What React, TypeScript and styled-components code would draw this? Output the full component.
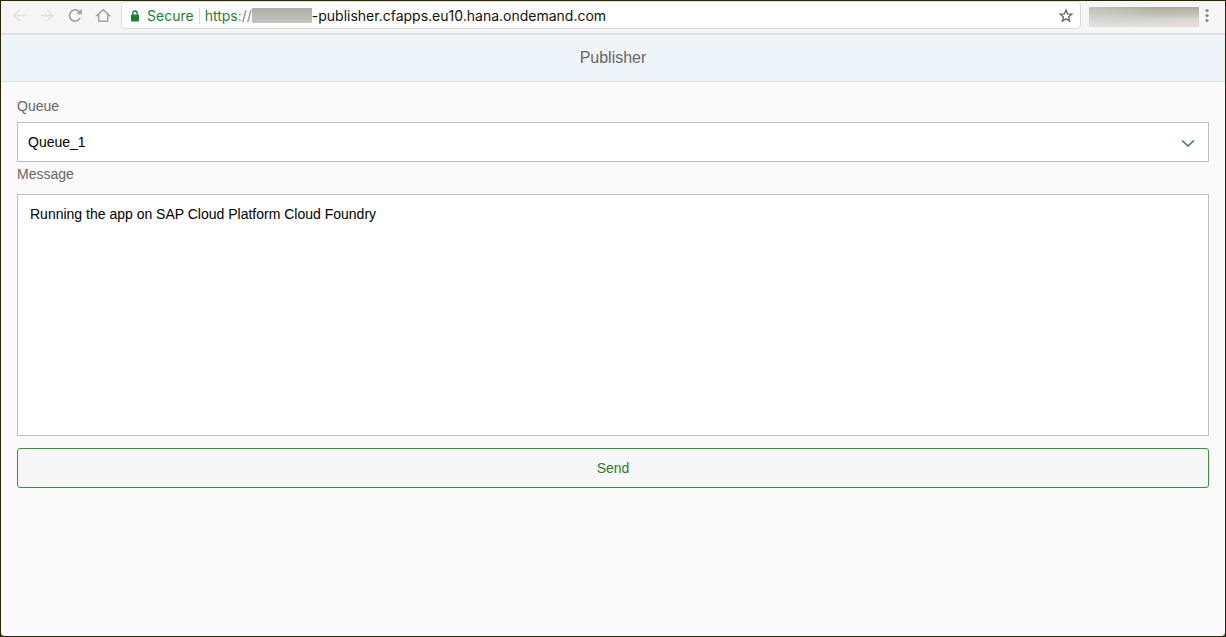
import React, { useState } from "react";
import styled, { createGlobalStyle } from "styled-components";

const GlobalStyle = createGlobalStyle`
  *, *::before, *::after { box-sizing: border-box; }
  body {
    margin: 0;
    font-family: "Liberation Sans", Arial, sans-serif;
    font-size: 14px;
  }
`;

const Frame = styled.div`
  display: flex;
  flex-direction: column;
  min-height: 100vh;
  border: 1px solid #2b2602;
  background: #55544c;
`;

const Toolbar = styled.nav`
  display: flex;
  align-items: flex-start;
  height: 34px;
  padding-right: 13px;
  background: #f6f6f6;
  border-bottom: 2px solid #e0e1e4;
`;

const NavButtons = styled.div`
  display: flex;
  width: 120px;
  padding: 6px 0 0 9px;
  gap: 10px;
`;

const IconButton = styled.button<{ $color: string }>`
  display: flex;
  padding: 0;
  border: 0;
  background: none;
  color: ${(p) => p.$color};
`;

const AddressBar = styled.div`
  display: flex;
  align-items: center;
  flex: 1;
  min-width: 0;
  height: 28px;
  padding: 2px 6px 0 8px;
  border: 1px solid #dcdcdc;
  border-radius: 4px;
  background: #ffffff;
  font-family: Inter, Roboto, sans-serif;
  color: #111111;
`;

const Secure = styled.span`
  display: flex;
  align-items: center;
  gap: 7px;
  padding-right: 5px;
  margin-right: 5px;
  border-right: 1px solid #d8d8d8;
  color: #1c7f37;
  line-height: 16px;
`;

const Url = styled.span`
  display: flex;
  align-items: center;
  flex: 1;
  min-width: 0;
  line-height: 16px;
  white-space: nowrap;
`;

const Scheme = styled.span`
  color: #1c7f37;
`;

const Slashes = styled.span`
  color: #808080;
`;

const HiddenHost = styled.span`
  width: 60px;
  height: 15px;
  margin-bottom: 2px;
  background: linear-gradient(#adada3, #c3c5bf);
`;

const HiddenTools = styled.div`
  width: 110px;
  height: 20px;
  margin: 6px 0 0 8px;
  background:
    radial-gradient(ellipse at 95% 100%, #e6dcd9 0%, transparent 45%),
    linear-gradient(90deg, #dde0dc66 0%, transparent 60%),
    linear-gradient(#adac9c 0%, #c5c7be 45%, #e2e4e1 100%);
`;

const MenuButton = styled(IconButton)`
  margin: 7px 0 0 5px;
`;

const Page = styled.div`
  display: flex;
  flex-direction: column;
  flex: 1;
  border-radius: 0 0 4px 4px;
  background: #fafafa;
`;

const Header = styled.header`
  display: flex;
  align-items: center;
  justify-content: center;
  height: 47px;
  background: #eff4f9;
  border-bottom: 1px solid #d9e2ea;
`;

const Title = styled.h1`
  margin: 0;
  font-size: 16px;
  font-weight: 400;
  line-height: 24px;
  color: #666666;
`;

const Form = styled.form`
  display: flex;
  flex-direction: column;
  padding: 12px 16px;
`;

const Label = styled.label`
  line-height: 24px;
  color: #666666;
`;

const SelectBox = styled.div`
  display: grid;
  align-items: center;
  margin-top: 4px;

  > * { grid-area: 1 / 1; }
  > svg {
    justify-self: end;
    margin-right: 13px;
    pointer-events: none;
  }
`;

const Select = styled.select`
  appearance: none;
  width: 100%;
  height: 40px;
  padding: 0 40px 0 10px;
  border: 1px solid #bfbfbf;
  border-radius: 0;
  background: #ffffff;
  color: #000000;
  font: inherit;
`;

const TextArea = styled.textarea`
  display: block;
  height: 242px;
  margin-top: 8px;
  padding: 10px 12px;
  border: 1px solid #bfbfbf;
  border-radius: 0;
  background: #ffffff;
  color: #000000;
  font: inherit;
  line-height: 18px;
  resize: none;
`;

const SendButton = styled.button`
  height: 40px;
  margin-top: 12px;
  border: 1px solid #3d8b40;
  border-radius: 3px;
  background: #f7f7f7;
  color: #2b7c2b;
  font: inherit;
`;

const stroke = { fill: "none", stroke: "currentColor", strokeWidth: 1.5 };

const BackIcon = () => (
  <svg width="18" height="18" viewBox="0 0 18 18" {...stroke}>
    <path d="M15.5 8.5H4M9.5 3L4 8.5 9.5 14" />
  </svg>
);

const ForwardIcon = () => (
  <svg width="18" height="18" viewBox="0 0 18 18" {...stroke}>
    <path d="M3 8.5H14.5M9 3L14.5 8.5 9 14" />
  </svg>
);

const ReloadIcon = () => (
  <svg width="18" height="18" viewBox="0 0 18 18" {...stroke} strokeWidth={1.7}>
    <path d="M14 11.2a5.6 5.6 0 1 1-.4-6" />
    <path d="M15.8 1.7v5.5H10.2z" fill="currentColor" stroke="none" />
  </svg>
);

const HomeIcon = () => (
  <svg width="18" height="18" viewBox="0 0 18 18" {...stroke}>
    <path d="M4.7 8.6v5.6h9V8.6h1.8L9.2 2.7 2.9 8.6z" />
  </svg>
);

const LockIcon = () => (
  <svg width="10" height="12" viewBox="0 0 10 12">
    <rect x="1" y="4.5" width="8" height="7" rx="0.8" fill="currentColor" />
    <path d="M2.8 5V3.2a2.2 2.2 0 0 1 4.4 0V5" fill="none" stroke="currentColor" strokeWidth="1.3" />
  </svg>
);

const StarIcon = () => (
  <svg width="16" height="16" viewBox="0 0 16 16" {...stroke} strokeWidth={1.4}>
    <path d="M8 2l1.6 3.9 4.2.3-3.2 2.7 1 4.1L8 10.8l-3.6 2.2 1-4.1-3.2-2.7 4.2-.3z" />
  </svg>
);

const MoreIcon = () => (
  <svg width="8" height="16" viewBox="0 0 8 16" fill="currentColor">
    <circle cx="3" cy="2.5" r="1.6" />
    <circle cx="3" cy="7.5" r="1.6" />
    <circle cx="3" cy="12.5" r="1.6" />
  </svg>
);

const ChevronIcon = () => (
  <svg width="16" height="12" viewBox="0 0 16 12" fill="none" stroke="#446a93" strokeWidth="1.6">
    <path d="M2 4.5l6 5.5 6-5.5" />
  </svg>
);

export default function App() {
  const [queue, setQueue] = useState("Queue_1");
  const [message, setMessage] = useState("Running the app on SAP Cloud Platform Cloud Foundry");

  return (
    <>
      <GlobalStyle />
      <Frame>
        <Toolbar>
          <NavButtons>
            <IconButton type="button" $color="#e0e0e0" aria-label="Back"><BackIcon /></IconButton>
            <IconButton type="button" $color="#e0e0e0" aria-label="Forward"><ForwardIcon /></IconButton>
            <IconButton type="button" $color="#a3a3a6" aria-label="Reload"><ReloadIcon /></IconButton>
            <IconButton type="button" $color="#a3a3a6" aria-label="Home"><HomeIcon /></IconButton>
          </NavButtons>
          <AddressBar>
            <Secure><LockIcon />Secure</Secure>
            <Url>
              <Scheme>https</Scheme>
              <Slashes>://</Slashes>
              <HiddenHost />
              <span>-publisher.cfapps.eu10.hana.ondemand.com</span>
            </Url>
            <IconButton type="button" $color="#68696d" aria-label="Bookmark"><StarIcon /></IconButton>
          </AddressBar>
          <HiddenTools />
          <MenuButton type="button" $color="#858585" aria-label="Menu"><MoreIcon /></MenuButton>
        </Toolbar>
        <Page>
          <Header><Title>Publisher</Title></Header>
          <Form onSubmit={(e) => e.preventDefault()}>
            <Label htmlFor="queue">Queue</Label>
            <SelectBox>
              <Select id="queue" value={queue} onChange={(e) => setQueue(e.target.value)}>
                <option>Queue_1</option>
              </Select>
              <ChevronIcon />
            </SelectBox>
            <Label htmlFor="message">Message</Label>
            <TextArea id="message" value={message} onChange={(e) => setMessage(e.target.value)} />
            <SendButton type="submit">Send</SendButton>
          </Form>
        </Page>
      </Frame>
    </>
  );
}
